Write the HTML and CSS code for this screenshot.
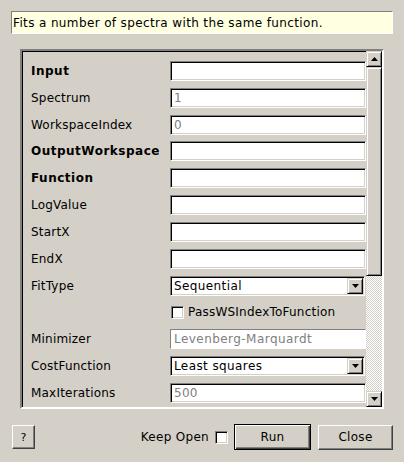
FILE: index.html
```html
<!DOCTYPE html>
<html>
<head>
<meta charset="utf-8">
<link rel="stylesheet" href="styles.css">
</head>
<body>
<div class="dialog">
  <div class="desc">Fits a number of spectra with the same function.</div>
  <div class="frame">
    <div class="content">
      <div class="row"><span class="label req">Input</span><span class="field"></span></div>
      <div class="row"><span class="label">Spectrum</span><span class="field dim">1</span></div>
      <div class="row"><span class="label">WorkspaceIndex</span><span class="field dim">0</span></div>
      <div class="row"><span class="label req">OutputWorkspace</span><span class="field"></span></div>
      <div class="row"><span class="label req">Function</span><span class="field"></span></div>
      <div class="row"><span class="label">LogValue</span><span class="field"></span></div>
      <div class="row"><span class="label">StartX</span><span class="field"></span></div>
      <div class="row"><span class="label">EndX</span><span class="field"></span></div>
      <div class="row"><span class="label">FitType</span><span class="combo"><span class="combo-text">Sequential</span><span class="combo-btn"><svg width="7" height="4" viewBox="0 0 7 4"><polygon points="0,0 7,0 3.5,4" fill="#000"/></svg></span></span></div>
      <div class="row"><span class="label"></span><span class="check-wrap"><span class="checkbox"></span><span class="check-text">PassWSIndexToFunction</span></span></div>
      <div class="row"><span class="label">Minimizer</span><span class="field disabled">Levenberg-Marquardt</span></div>
      <div class="row"><span class="label">CostFunction</span><span class="combo"><span class="combo-text">Least squares</span><span class="combo-btn"><svg width="7" height="4" viewBox="0 0 7 4"><polygon points="0,0 7,0 3.5,4" fill="#000"/></svg></span></span></div>
      <div class="row"><span class="label">MaxIterations</span><span class="field dim">500</span></div>
    </div>
    <div class="scrollbar">
      <div class="sb-btn"><svg width="7" height="4" viewBox="0 0 7 4"><polygon points="3.5,0 7,4 0,4" fill="#000"/></svg></div>
      <div class="sb-thumb"></div>
      <div class="sb-track"></div>
      <div class="sb-btn"><svg width="7" height="4" viewBox="0 0 7 4"><polygon points="0,0 7,0 3.5,4" fill="#000"/></svg></div>
    </div>
  </div>
  <div class="buttons">
    <span class="btn help">?</span>
    <span class="spacer"></span>
    <span class="keep">Keep Open</span>
    <span class="checkbox keep-box"></span>
    <span class="btn run">Run</span>
    <span class="btn close">Close</span>
  </div>
</div>
</body>
</html>
```
FILE: styles.css
```css
html, body {
  margin: 0;
  padding: 0;
  background: #d4d0c8;
}
body {
  font-family: "DejaVu Sans", "Liberation Sans", sans-serif;
  font-size: 12px;
  letter-spacing: 0.3px;
  color: #000;
  width: 404px;
  height: 462px;
  overflow: hidden;
}
.dialog {
  padding: 11px 11px 0 11px;
}
.desc {
  height: 21px;
  line-height: 22px;
  border: 1px solid;
  border-color: #808080 #ffffff #ffffff #808080;
  background: #ffffe1;
  padding-left: 1px;
  letter-spacing: 0.37px;
  white-space: nowrap;
}
.frame {
  margin: 15px 0 0 9px;
  width: 360px;
  height: 356px;
  border: 2px solid;
  border-color: #808080 #ffffff #ffffff #808080;
  box-shadow: inset 1px 1px 0 #000;
  display: flex;
  overflow: hidden;
}
.content {
  flex: 1;
  padding: 10px 0 0 9px;
  display: flex;
  flex-direction: column;
  gap: 6.83px;
  overflow: hidden;
}
.row {
  display: flex;
  align-items: center;
  height: 20px;
  flex: none;
}
.label {
  width: 139px;
  flex: none;
  white-space: nowrap;
  letter-spacing: 0.2px;
}
.label.req {
  font-weight: bold;
  letter-spacing: 0.5px;
}
.field {
  box-sizing: border-box;
  width: 196px;
  height: 20px;
  background: #fff;
  border: 1px solid;
  border-color: #808080 #ffffff #ffffff #808080;
  box-shadow: inset 1px 1px 0 #000, inset -1px -1px 0 #d4d0c8;
  padding-left: 3px;
  line-height: 19px;
  white-space: nowrap;
}
.field.dim {
  color: #808080;
}
.field.disabled {
  color: #808080;
  box-shadow: none;
  letter-spacing: 0.45px;
}
.combo {
  box-sizing: border-box;
  width: 195px;
  height: 20px;
  background: #fff;
  border: 1px solid;
  border-color: #808080 #ffffff #ffffff #808080;
  box-shadow: inset 1px 1px 0 #000, inset -1px -1px 0 #d4d0c8;
  padding: 1px;
  display: flex;
  align-items: center;
}
.combo-text {
  flex: 1;
  padding-left: 2px;
  letter-spacing: 0.4px;
}
.combo-btn {
  box-sizing: border-box;
  width: 16px;
  height: 16px;
  background: #d4d0c8;
  border: 1px solid;
  border-color: #d4d0c8 #000 #000 #d4d0c8;
  box-shadow: inset 1px 1px 0 #fff, inset -1px -1px 0 #808080;
  display: flex;
  align-items: center;
  justify-content: center;
}
.combo-btn svg {
  display: block;
}
.check-wrap {
  display: flex;
  align-items: center;
  padding-left: 1px;
}
.checkbox {
  box-sizing: border-box;
  width: 13px;
  height: 13px;
  background: #fff;
  border: 1px solid;
  border-color: #808080 #ffffff #ffffff #808080;
  box-shadow: inset 1px 1px 0 #000, inset -1px -1px 0 #d4d0c8;
  flex: none;
}
.check-text {
  margin-left: 4px;
  letter-spacing: 0.22px;
}
.scrollbar {
  width: 16px;
  flex: none;
  display: flex;
  flex-direction: column;
}
.sb-btn {
  box-sizing: border-box;
  height: 16px;
  flex: none;
  background: #d4d0c8;
  border: 1px solid;
  border-color: #d4d0c8 #000 #000 #d4d0c8;
  box-shadow: inset 1px 1px 0 #fff, inset -1px -1px 0 #808080;
  display: flex;
  align-items: center;
  justify-content: center;
}
.sb-btn svg {
  display: block;
}
.sb-thumb {
  box-sizing: border-box;
  height: 209px;
  flex: none;
  background: #d4d0c8;
  border: 1px solid;
  border-color: #d4d0c8 #000 #000 #d4d0c8;
  box-shadow: inset 1px 1px 0 #fff, inset -1px -1px 0 #808080;
}
.sb-track {
  flex: 1;
  background: repeating-conic-gradient(#ffffff 0 25%, #d4d0c8 0 50%) 0 0 / 2px 2px;
}
.buttons {
  display: flex;
  align-items: center;
  margin-top: 15px;
  height: 26px;
}
.btn {
  box-sizing: border-box;
  display: flex;
  align-items: center;
  justify-content: center;
  background: #d4d0c8;
  border: 1px solid;
  border-color: #fff #404040 #404040 #fff;
  box-shadow: inset -1px -1px 0 #808080;
}
.help {
  width: 23px;
  height: 24px;
  margin-left: 1px;
  font-size: 11px;
}
.spacer {
  flex: 1;
}
.keep {
  margin-right: 6px;
}
.keep-box {
  margin-right: 6px;
}
.run {
  width: 77px;
  height: 26px;
  border: 1px solid #000;
  box-shadow: inset 1px 1px 0 #fff, inset -1px -1px 0 #404040, inset -2px -2px 0 #808080;
}
.close {
  width: 75px;
  height: 25px;
  margin-left: 7px;
}
```
